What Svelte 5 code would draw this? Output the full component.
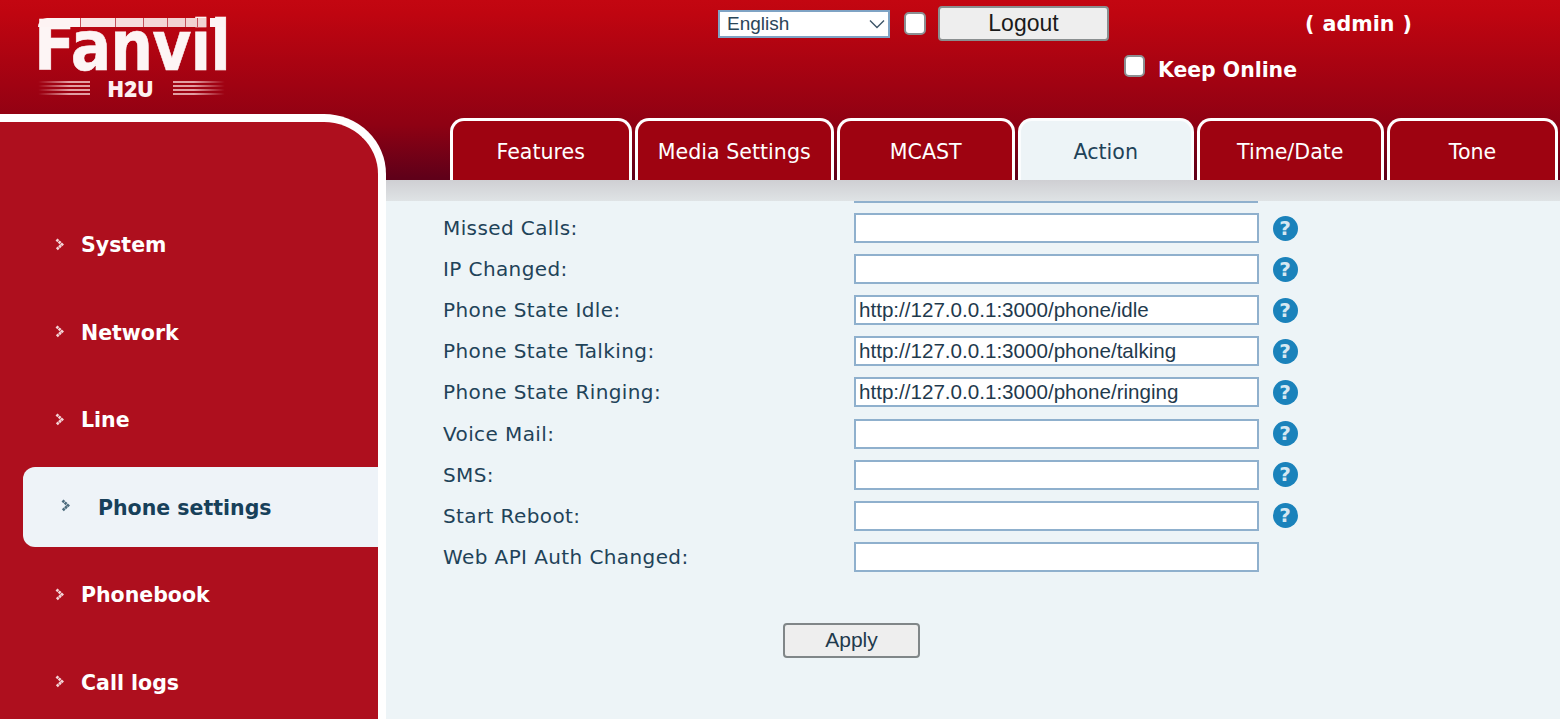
<script>
  const menu = ['System', 'Network', 'Line', 'Phone settings', 'Phonebook', 'Call logs'];
  const tabs = [
    ['Features', 181.5], ['Media Settings', 198.5], ['MCAST', 177.5],
    ['Action', 175.5], ['Time/Date', 186.5], ['Tone', 171]
  ];
  const rows = [
    ['Missed Calls:', '', true],
    ['IP Changed:', '', true],
    ['Phone State Idle:', 'http://127.0.0.1:3000/phone/idle', true],
    ['Phone State Talking:', 'http://127.0.0.1:3000/phone/talking', true],
    ['Phone State Ringing:', 'http://127.0.0.1:3000/phone/ringing', true],
    ['Voice Mail:', '', true],
    ['SMS:', '', true],
    ['Start Reboot:', '', true],
    ['Web API Auth Changed:', '', false]
  ];
</script>

<div class="page">
  <header class="top">
    <div class="logo">
      <div class="word">Fanvil</div>
      <i class="slab"></i>
      <div class="sub"><i class="lines"></i><b>H2U</b><i class="lines"></i></div>
    </div>
    <div class="controls">
      <div class="line1">
        <div class="select">
          <span>English</span>
          <svg width="18" height="10" viewBox="0 0 18 10"><path d="M2 1.500 9 8.500 16 1.500" fill="none" stroke="#3d5568" stroke-width="1.400"/></svg>
        </div>
        <input class="check first" type="checkbox" />
        <button class="logout">Logout</button>
        <span class="admin">( admin )</span>
      </div>
      <div class="line2">
        <input class="check small" type="checkbox" />
        <span class="keep">Keep Online</span>
      </div>
    </div>
  </header>

  <div class="body">
    <aside class="side">
      <nav>
        {#each menu as item, i}
          <div class="item" class:active={i === 3}>
            <svg class="arrow" width="9" height="13" viewBox="0 0 9 13"><path d="M1.500 1.500 7 6.500 1.500 11.500" fill="none" stroke="currentColor" stroke-width="2.800" stroke-dasharray="2.400 .6"/></svg>
            <span>{item}</span>
          </div>
        {/each}
      </nav>
    </aside>

    <main class="main">
      <div class="tabs">
        {#each tabs as [name, w], i}
          <div class="tab" class:on={i === 3} style="width:{w}px">{name}</div>
        {/each}
      </div>
      <div class="band"></div>
      <section class="content">
        <div class="stub"></div>
        <div class="form">
          {#each rows as [label, value, help]}
            <div class="row">
              <label>{label}</label>
              <input class="field" type="text" value={value} />
              {#if help}
                <span class="help">?</span>
              {/if}
            </div>
          {/each}
        </div>
        <div class="actions"><button class="apply">Apply</button></div>
      </section>
    </main>
  </div>
</div>

<style>
  :global(body) { margin: 0; }
  .page {
    width: 1560px; height: 719px; overflow: hidden;
    display: flex; flex-direction: column;
    background: linear-gradient(180deg, #c30611 0, #c00510 12px, #a00212 85px, #8e0113 125px, #5f0019 178px, #5f0019 100%);
    font-family: "DejaVu Sans", Verdana, sans-serif;
  }
  .top { height: 114px; display: flex; flex: none; }
  .logo { width: 718px; flex: none; padding: 18px 0 0 38px; box-sizing: border-box; position: relative; }
  .word {
    width: 187px; height: 53px; margin: 2px 0 0 -4px;
    color: #fdf5f5; font: bold 70px/53px "DejaVu Sans", sans-serif;
    transform: scaleX(.858); transform-origin: 0 50%;
    letter-spacing: -1px; white-space: nowrap; -webkit-text-stroke: .6px #fdf5f5;
  }
  .slab {
    position: absolute; left: 38px; top: 18px; width: 187px; height: 9px; border-radius: 9px 0 0 0;
    background: linear-gradient(90deg, #fdf3f3 0 42px, #c2505a 42px 43px, #f9e4e4 43px 77px, #c2505a 77px 78px, #f6dcdc 78px 105px, #c2505a 105px 106px, #f4d6d6 106px 129px, #c2505a 129px 130px, #f2d2d2 130px 147px, #c2505a 147px 148px, #f2d2d2 148px 159px, #c2505a 159px 160px, #f2d2d2 160px 168px, transparent 168px 172px, #fdf3f3 172px 187px);
  }
  .sub { width: 187px; display: flex; align-items: center; justify-content: space-between; margin-top: 7px; height: 16px; color: #fdf0f0; }
  .sub b { font: 800 22px/16px "Open Sans", sans-serif; width: 48px; text-align: center; margin-left: -2px; }
  .lines {
    width: 52px; height: 14px;
    background: repeating-linear-gradient(180deg, rgba(255,225,225,.7) 0 2px, transparent 2px 4px);
  }
  .lines:first-child { mask-image: linear-gradient(90deg, transparent, #000 60%); -webkit-mask-image: linear-gradient(90deg, transparent, #000 60%); }
  .lines:last-child { mask-image: linear-gradient(270deg, transparent, #000 60%); -webkit-mask-image: linear-gradient(270deg, transparent, #000 60%); }

  .controls { flex: 1; padding-top: 6px; }
  .line1 { display: flex; align-items: center; height: 35px; }
  .select {
    width: 172px; height: 28px; box-sizing: border-box; background: #fff;
    border: 2px solid #7fa3c4; display: flex; align-items: center; justify-content: space-between;
    padding: 0 2px 0 7px; font: 19px "Liberation Sans", Arial, sans-serif; color: #2a4558;
  }
  .check {
    appearance: none; -webkit-appearance: none; margin: 0; box-sizing: border-box;
    width: 22px; height: 23px; background: #fff; border: 2px solid #8b8f92; border-radius: 5px;
  }
  .first { margin: 0 12px 0 14px; }
  .small { width: 21px; height: 22px; margin-top: -2px; }
  .logout {
    width: 171px; height: 35px; box-sizing: border-box; padding: 0; background: #eeeeee;
    border: 2px solid #8a8f90; border-radius: 4px; font: 23px "Liberation Sans", Arial, sans-serif; color: #1a1a1a;
  }
  .admin { margin-left: 196px; color: #fff; font: bold 20.600px "DejaVu Sans", sans-serif; white-space: pre; word-spacing: 1px; }
  .line2 { display: flex; align-items: center; margin: 14px 0 0 406px; height: 24px; }
  .keep { color: #fff; font: bold 20.400px "DejaVu Sans", sans-serif; margin: 6px 0 0 13px; }

  .body { display: flex; flex: 1; min-height: 0; }
  .side {
    width: 386px; flex: none; box-sizing: border-box; background: #ae0f1e;
    border: solid #fff; border-width: 8px 8px 0 0; border-top-right-radius: 62px 60px;
  }
  nav { padding-top: 83px; display: flex; flex-direction: column; gap: 7.500px; }
  .item {
    height: 80px; display: flex; align-items: center; gap: 17px; padding-left: 55px;
    color: #fff; font: bold 20.500px "DejaVu Sans", sans-serif; box-sizing: border-box;
  }
  .arrow { flex: none; color: #f3d5d8; margin-top: -2px; }
  .item.active {
    margin: -1px 0 1px 23px; padding: 2px 0 0 38px; gap: 28px;
    background: #eef3f8; color: #17405a; border-radius: 12px 0 0 12px;
  }
  .item.active .arrow { color: #4c6b7c; margin-top: -4px; }

  .main { flex: 1; min-width: 0; display: flex; flex-direction: column; }
  .tabs { display: flex; height: 66px; align-items: flex-end; gap: 3.500px; padding-left: 64px; flex: none; }
  .tab {
    height: 62px; flex: none; box-sizing: border-box; background: #9e0311;
    border: 3px solid #fff; border-bottom: 0; border-radius: 14px 14px 0 0;
    color: #fff; font: 20.600px/62px "DejaVu Sans", sans-serif; text-align: center;
  }
  .tab.on { background: #edf4f7; color: #1f4359; border-color: #fbfdfe; }
  .band { height: 21px; flex: none; background: linear-gradient(180deg, #cfcfd3, #dfe3e5); }
  .content { flex: 1; background: #edf4f7; position: relative; }
  .stub { height: 2px; width: 404px; margin-left: 468px; background: #8fb0cd; }
  .form { padding-top: 10px; display: flex; flex-direction: column; gap: 11.120px; }
  .row { display: flex; align-items: center; height: 30px; padding-left: 57px; color: #1f4359; }
  .row label { width: 411px; flex: none; font: 20px "DejaVu Sans", sans-serif; letter-spacing: .4px; }
  .field {
    width: 405px; height: 30px; flex: none; box-sizing: border-box; margin: 0; background: #fff;
    border: 2px solid #8fb0cd; outline: 0; padding: 0 3px; font: 20.600px "Liberation Sans", Arial, sans-serif; color: #1f3a4d;
  }
  .help {
    margin-left: 13.500px; width: 25px; height: 25px; border-radius: 50%; background: #1a82bb;
    color: #d6e8f2; font: bold 20px/25px "DejaVu Sans", sans-serif; text-align: center; flex: none;
  }
  .actions { padding: 51px 0 0 397px; }
  .apply {
    width: 137px; height: 35px; box-sizing: border-box; padding: 0; background: #eeeeee;
    border: 2px solid #808688; border-radius: 4px; font: 21px "Liberation Sans", Arial, sans-serif; color: #1f3a4d;
  }
</style>
